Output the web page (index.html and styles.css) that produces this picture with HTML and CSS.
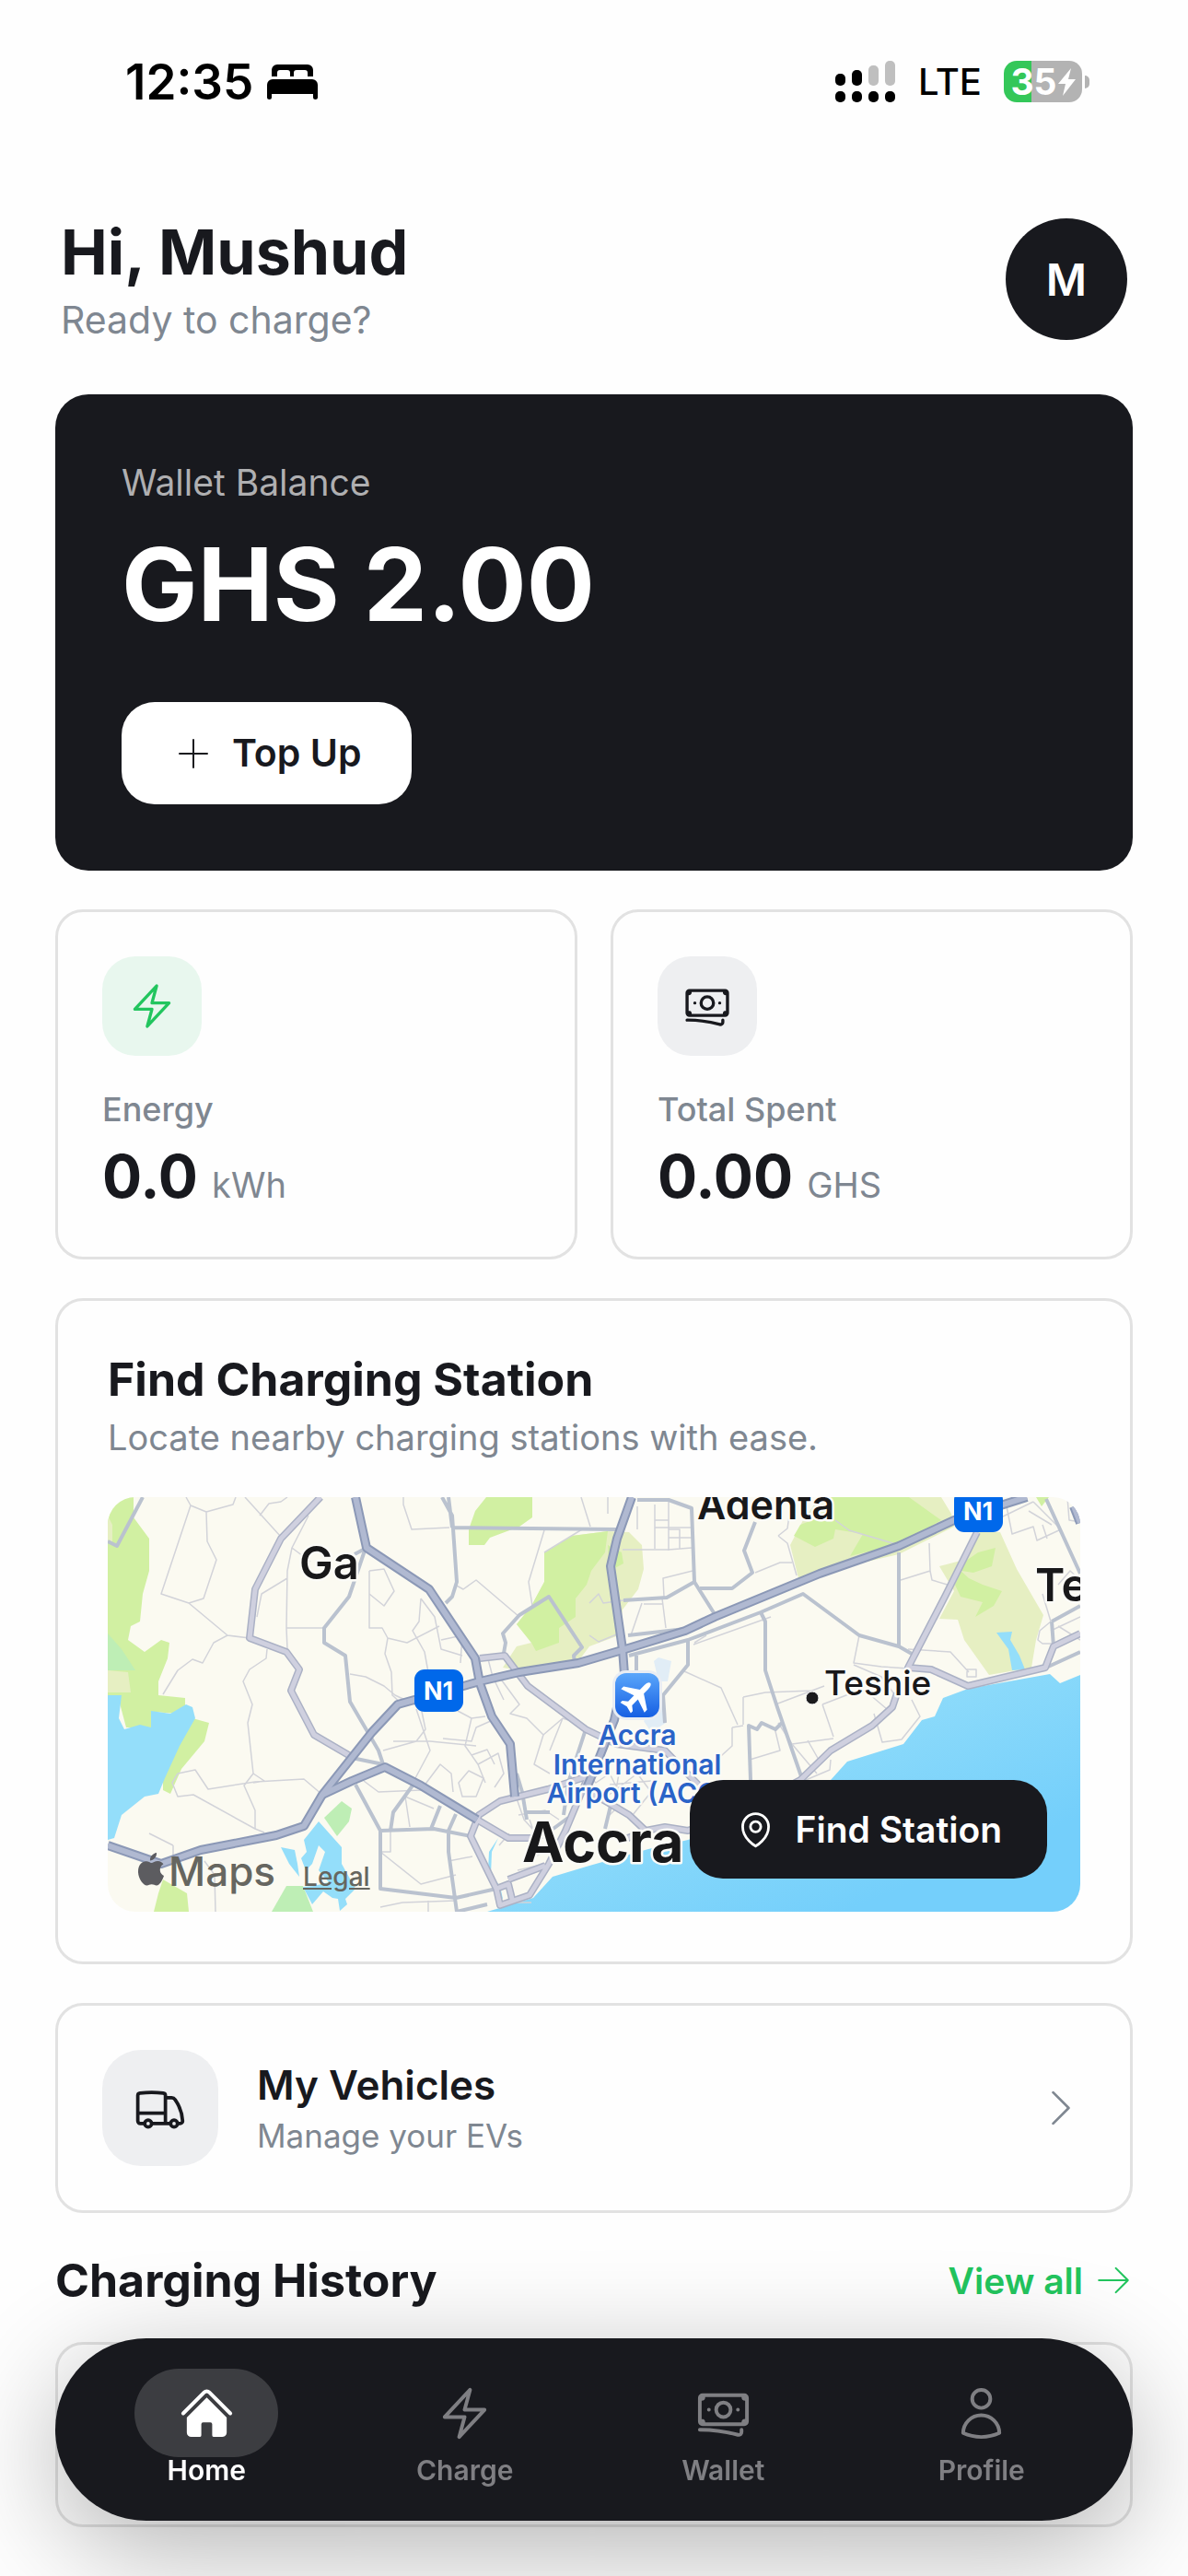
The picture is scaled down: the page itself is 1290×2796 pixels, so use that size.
FILE: index.html
```html
<!DOCTYPE html>
<html lang="en">

<head>
  <meta charset="UTF-8" />
  <meta name="viewport" content="width=device-width, initial-scale=1.0" />
  <title>Home</title>
  <link rel="stylesheet" href="styles.css">
</head>

<body>
  <div class="status-bar">
    <div class="status-left">
      <span class="status-time">12:35</span>
      <svg class="status-bed" viewBox="0 0 55 38" aria-hidden="true">
        <path d="M5 13V6a6 6 0 0 1 6-6h33a6 6 0 0 1 6 6v7h-6V9a3 3 0 0 0-3-3H32a3 3 0 0 0-3 3v4h-4V9a3 3 0 0 0-3-3h-8a3 3 0 0 0-3 3v4Z" />
        <path d="M0 36V22a6 6 0 0 1 6-6h43a6 6 0 0 1 6 6v14q0 2-2.500 2T50 36v-4H5v4q0 2-2.500 2T0 36Z" />
      </svg>
    </div>
    <div class="status-right">
      <svg class="status-signal" viewBox="0 0 66 45" aria-hidden="true">
        <rect x="0" y="14" width="11" height="13" rx="5" />
        <rect x="18" y="10" width="11" height="17" rx="5" />
        <rect class="dim" x="36" y="5" width="11" height="22" rx="5" />
        <rect class="dim" x="54" y="0" width="11" height="27" rx="5" />
        <rect x="0" y="33" width="11" height="12" rx="5" />
        <rect x="18" y="33" width="11" height="12" rx="5" />
        <rect x="36" y="33" width="11" height="12" rx="5" />
        <rect x="54" y="33" width="11" height="12" rx="5" />
      </svg>
      <span class="status-network">LTE</span>
      <div class="battery">
        <div class="battery-body">
          <span>35</span>
          <svg viewBox="0 0 19 30" aria-hidden="true">
            <path d="M14 0 0 17h8L5 30 19 12h-8l3-12Z" />
          </svg>
        </div>
        <div class="battery-nub"></div>
      </div>
    </div>
  </div>

  <main class="content">
    <header class="greeting">
      <div>
        <h1>Hi, Mushud</h1>
        <p>Ready to charge?</p>
      </div>
      <button class="avatar" type="button" aria-label="Account">M</button>
    </header>

    <section class="wallet">
      <p class="wallet-label">Wallet Balance</p>
      <p class="wallet-amount">GHS 2.00</p>
      <button class="topup" type="button">
        <svg class="icon" viewBox="0 0 24 24" aria-hidden="true"><path d="M12 4.500v15m7.500-7.500h-15" /></svg>
        Top Up
      </button>
    </section>

    <section class="stats">
      <article class="card stat">
        <div class="tile tile-green">
          <svg class="icon" viewBox="0 0 24 24" aria-hidden="true"><path d="m3.750 13.500 10.500-11.250L12 10.500h8.250L9.750 21.750 12 13.500H3.750Z" /></svg>
        </div>
        <p class="stat-label">Energy</p>
        <p class="stat-value">0.0 <small>kWh</small></p>
      </article>
      <article class="card stat">
        <div class="tile">
          <svg class="icon" viewBox="0 0 24 24" aria-hidden="true"><path d="M2.250 18.750a60.070 60.070 0 0 1 15.797 2.101c.727.198 1.453-.342 1.453-1.096V18.750M3.750 4.500v.750A.750.750 0 0 1 3 6h-.750m0 0v-.375c0-.621.504-1.125 1.125-1.125H20.250M2.250 6v9m18-10.500v.750c0 .414.336.750.750.750h.750m-1.500-1.500h.375c.621 0 1.125.504 1.125 1.125v9.750c0 .621-.504 1.125-1.125 1.125h-.375m1.500-1.500H21a.750.750 0 0 0-.750.750v.750m0 0H3.750m0 0h-.375a1.125 1.125 0 0 1-1.125-1.125V15m1.500 1.500v-.750A.750.750 0 0 0 3 15h-.750M15 10.500a3 3 0 1 1-6 0 3 3 0 0 1 6 0Zm3 0h.008v.008H18V10.500Zm-12 0h.008v.008H6V10.500Z" /></svg>
        </div>
        <p class="stat-label">Total Spent</p>
        <p class="stat-value">0.00 <small>GHS</small></p>
      </article>
    </section>

    <section class="card finder">
      <h2>Find Charging Station</h2>
      <p class="finder-text">Locate nearby charging stations with ease.</p>
      <div class="map">
        <svg class="map-canvas" viewBox="0 0 1056 450" preserveAspectRatio="xMidYMid slice" role="img" aria-label="Map of Accra">
          <defs>
            <linearGradient id="sea" x1="0" y1="0" x2="1" y2="1">
              <stop offset="0.300" stop-color="#94defa" />
              <stop offset="0.800" stop-color="#74cffb" />
            </linearGradient>
            <linearGradient id="airport" x1="0" y1="0" x2="0" y2="1">
              <stop offset="0" stop-color="#5aa6fb" />
              <stop offset="1" stop-color="#165fe3" />
            </linearGradient>
          </defs>

          <!-- parks -->
          <g class="scrub">
            <path d="M474 60 504 42 543 37 566 38 580 52 582 78 576 100 559 122 555 150 523 162 511 178 447 188 429 185 444 162 460 158 444 138 460 118 474 92Z" />
            <path d="M773 0H905L916 18 919 32 859 62 773 82 750 88 741 52 755 25Z" />
            <path d="M945 38H969L987 78 1016 128 1008 155 1003 185 957 193 930 155 923 133 903 132 919 102 903 75 930 68Z" />
          </g>
          <g class="park">
            <path d="M0 0H28V22L45 45V80L38 105 35 135 25 140 22 155 40 168 58 155 67 158 65 175 55 200 55 215 84 218 84 226 75 235 50 233 47 250 20 250 12 220 0 215Z" />
            <path d="M92 240 110 245 105 265 80 295 68 322 60 318 60 305 80 255Z" />
            <path d="M60 415 86 430 88 450H50L55 430Z" />
            <path d="M411 0H461V22L447 32 415 44 409 52 392 52 392 35 399 15Z" />
            <path d="M474 60 504 42 543 37 540 60 525 80 520 95 508 110 508 130 490 142 490 158 465 167 460 158 444 138 460 118 474 92Z" />
            <path d="M543 52 558 60 560 72 545 80Z" />
            <path d="M773 0H870L905 25 890 34 859 53 830 58 806 64 820 40 790 35 788 45 768 54 745 42 752 30 778 20Z" />
            <path d="M964 55 960 75 940 82 927 80 920 95 926 108 950 114 942 130 962 118 971 102 950 95 935 88 922 76 945 60Z" />
            <path d="M1008 0h14l-8 10z" />
          </g>
          <g class="marsh">
            <path d="M0 148 15 165 30 188H0Z" />
            <path d="M254 330 265 338 262 352 249 368 235 348Z" />
            <path d="M194 422H212L223 450H178Z" />
          </g>
          <path class="scrub" d="M0 188 22 190 25 212 0 212ZM0 20 5 30 5 48 0 50Z" />

          <!-- water -->
          <g class="water">
            <path d="M0 215H15L12 240 18 252 35 247 47 250 47 232 68 235 85 225 92 228 95 240 78 270 62 305 55 322 40 325 15 345 7 370 0 372Z" />
            <path d="M229 352 254 380 254 398 269 425 258 436 260 442 252 449 250 436 244 435 234 428 222 442 212 423 224 422 240 418 229 405 236 385 229 378 222 398 215 405 210 392 216 385 213 372Z" />
            <path d="M188 380 203 383 206 398 208 412 197 398Z" />
            <path d="M965 147 982 146 980 155 990 172 996 187 982 188 978 165Z" />
            <path d="M424 370 417 385 416 410 426 422 429 436 424 434 422 420 413 405 414 385Z" />
          </g>
          <path class="pond" d="M593 178 598 174 612 178 608 200 598 200ZM600 220 606 245 590 255 582 243Z" />
          <path fill="url(#sea)" d="M1056 193 1034 202 1023 192 934 208 907 218 898 238 884 242 864 268 803 287 785 307 740 335 630 372 587 382 523 400 483 412 462 435 412 450H1056Z" />

          <!-- side streets -->
          <g class="street">
            <path d="M85 0 90 9 58 105 88 115 130 150 154 153M90 9 107 16 136 8 139 0M107 16 108 48 118 68 104 110 88 115M149 0 188 43M165 20 175 7 188 5 195 0M130 150 115 158 103 180 92 176 76 188 60 214" />
            <path d="M173 165 172 175 154 187 147 200 157 225 152 245 158 300 148 313 160 340V360M218 20 200 55 195 80 194 142H235M194 142 195 165M200 55 220 70M195 88 167 105 162 130" />
            <path d="M76 300 95 296 109 317 160 309 213 306 233 323M76 300 70 310 76 325 93 323 160 360 170 364M45 365 71 378M71 378V392M105 395 116 410 117 450M158 300 170 308 158 310" />
            <path d="M284 80V142H298L304 153 325 158 360 140M284 80 300 78 311 102 300 118 284 105M304 153 301 170 308 190 309 215 320 225M340 110 338 135 331 145 344 168M340 110 355 130 362 165 385 172M377 95 386 100 400 90 447 130M362 155 385 150 383 180M344 168 348 190" />
            <path d="M321 0V8L330 35 371 33M514 0 524 32M474 36 457 92 461 118M474 60 515 35M263 192 280 195 300 205 312 215 340 228M340 228 345 252 335 265 299 275M335 230 350 275 334 305M310 265 350 265 400 270" />
            <path d="M402 175 408 200M412 172 418 195 430 220M425 195 447 225 437 235 455 240 473 258 463 290 480 300M395 240 410 238M364 262 395 265 400 250 418 242M380 232 395 240 388 270 402 290 410 310M402 290 424 278 430 300 420 315M395 280 412 274 420 290" />
            <path d="M278 308 294 320 340 318 361 290 373 300 375 320M381 310 392 297 408 305 400 325 385 325ZM323 325 354 338M296 385 340 420 378 410M307 362V385H296M370 395 396 390M323 325 328 358M296 445 320 440 378 438M348 438V450M437 440 H460" />
            <path d="M440 300 445 330 452 350 470 370M446 345 475 340 490 350M436 365 425 378M458 350 465 370M473 258 494 240 519 248M494 240 480 275M519 300 530 310 545 300 560 330 545 345M535 330 575 300 590 320 570 345M545 312 590 308M555 300 550 330M452 395 475 385M445 405 475 398" />
            <path d="M543 0V18M575 10 575 35M594 8V56M609 5V58M594 25H609M594 33H634M609 35H621V56M609 44H634M559 57H609L634 55M580 115 568 150M602 110 606 142M582 116H602M604 108 603 88 635 80M523 115 533 105 538 115 560 112M523 150 533 157 555 148" />
            <path d="M703 82 730 71 743 71M728 42 738 34 740 20M728 42 738 50 748 85M790 25 805 36 859 52M861 90 893 80 892 50M893 80 895 90 915 96M816 150 810 180 840 184 869 186M869 165 915 168 935 190M933 187H943V195H933ZM810 182 840 195 855 215" />
            <path d="M626 189 666 207 684 247M690 217 714 212 765 210M690 217 690 247M678 250 690 248M678 250 678 270 656 290M724 250 730 275 697 285M725 225 778 205M776 225 788 260M788 262 743 268 728 245M743 268 770 300M760 264 772 285 760 300M776 225 820 208 846 230M785 285 784 296 758 307M832 235 841 266 862 263 882 238 873 220M636 160 720 130M637 158 650 150" />
            <path d="M975 5 982 40 1005 32 1009 47 1035 35 1005 5M970 22 1005 5M1000 15 1025 30M1015 30 1020 45M1042 0 1044 25 1056 27M1015 105 1024 135M1024 135 1012 145 1010 155 1015 159 1027 159M1024 145 1056 130M1032 95 1045 80 1056 90M1032 140 1056 155" />
          </g>

          <!-- local roads -->
          <g class="local">
            <path d="M38 0 10 53 0 48M279 58 262 108 235 142 235 158 258 172 263 222 294 275 299 290M281 55 268 62" />
            <path d="M363 0 374 20 379 92 374 108 367 115M370 0 374 33M374 33 553 35M429 175 432 158 429 148 447 128 479 108 515 163 506 172 507 180" />
            <path d="M269 312 296 362 354 360 394 368M296 362V425L378 435 422 425M370 362 370 385 379 450 412 442M331 313 310 342 307 362M351 360 361 335M370 362 378 344M265 283 299 290" />
            <path d="M575 3 609 3 634 12 637 92 659 127M703 27 691 58 700 82 678 99 643 99M637 92 607 109 560 112M565 150 627 143M566 172 630 155 709 125 755 105 816 150 859 162 873 170M859 60V162" />
            <path d="M709 125 714 135V188L727 228 753 303M630 155V182L603 215 605 245M574 172V192M696 307 698 307 696 248 705 252 710 245 725 252 732 245M1019 2 1056 83M1025 135 1056 118M1025 135 1027 162M1019 185 1056 168" />
            <path d="M455 350 450 320 444 300M455 342 480 342M470 370 500 348M540 360 546 335M519 252 500 310 495 345" />
          </g>

          <!-- arterial roads, casing under fill -->
          <g class="arterial-case">
            <path id="a1" d="M231 0 188 45 160 100 154 153 194 168 208 187 199 210 224 258 265 282" />
            <path id="a2" d="M404 175 431 172 456 205 519 252 552 268 605 275 641 312" />
            <path id="a3" d="M944 38 909 108 869 185 894 187 934 205 1018 185 1027 162 1056 148" />
            <path id="a4" d="M857 213 852 228 830 248 785 275 752 307 700 335 630 362 605 358 584 362 560 372" />
            <path id="a5" d="M584 362 566 345 544 332 519 318M401 350 435 370 465 370M523 300 497 362 479 398 458 432 426 443 422 425 394 368 403 345 426 330 478 317 530 300" />
            <path id="a6" d="M422 425 435 420 440 440M435 415 475 400" />
          </g>
          <g class="arterial">
            <use href="#a1" /><use href="#a2" /><use href="#a3" /><use href="#a4" /><use href="#a5" /><use href="#a6" />
          </g>

          <!-- highways -->
          <g class="highway-case">
            <path id="h1" d="M0 378 58 398 101 383 183 367 213 357 233 323 287 255 315 225 404 200 447 190 511 180 562 165 627 145 659 130 773 83 859 53 919 25 998 0" />
            <path id="h2" d="M269 0 281 55 349 100 399 175 404 202 417 238 437 268 442 325" />
            <path id="h3" d="M233 323 265 308 301 293 340 313 401 350" />
            <path id="h4" d="M569 0 553 45 546 75 559 165 561 192 550 242 530 292 519 318" />
            <path id="h5" d="M1049 10 1056 28" />
          </g>
          <g class="highway">
            <use href="#h1" /><use href="#h2" /><use href="#h3" /><use href="#h4" /><use href="#h5" />
          </g>

          <!-- route shields -->
          <g class="shield">
            <rect x="333" y="187" width="53" height="46" rx="11" />
            <text x="359" y="220">N1</text>
            <rect x="919" y="-8" width="53" height="46" rx="11" />
            <text x="945" y="25">N1</text>
          </g>

          <!-- airport marker -->
          <rect x="548" y="188" width="54" height="54" rx="15" fill="#e9edf3" />
          <rect x="551" y="191" width="48" height="48" rx="12" fill="url(#airport)" />
          <path transform="translate(575 216) rotate(45)" fill="#fff" d="M0-20c2 0 3 3 3 6v7l15 10v4L3 2v9l5 4v3l-8-2-8 2v-3l5-4V2l-15 5V3L-3-7v-7c0-3 1-6 3-6Z" />

          <!-- place names -->
          <text class="place place-md" x="208" y="89">Ga</text>
          <text class="place place-sm" x="640" y="24">Adenta</text>
          <text class="place place-md" x="1007" y="113">Te</text>
          <circle cx="765" cy="218" r="7" fill="#1b1b1d" stroke="#fff" />
          <text class="place place-xs" x="778" y="215">Teshie</text>
          <text class="place place-lg" x="450" y="396">Accra</text>
          <g class="airport-name">
            <text x="575" y="269">Accra</text>
            <text x="575" y="301">International</text>
            <text x="575" y="332">Airport (ACC)</text>
          </g>
        </svg>
        <div class="map-credit">
          <span class="map-brand">
            <svg viewBox="0 0 28 36" aria-hidden="true">
              <path d="M20 0c.5 4-3 8.500-7 8.500C12.500 4.500 16 .5 20 0ZM14.500 11c1.500 0 3.500-2 7-2 2.500 0 4.500 1.300 6 3.200-5.500 3.300-4.500 10.600.5 12.800-1.500 4.500-4.500 10.500-8 10.500-2 0-3-1.200-5.300-1.200S11.500 35.500 9.500 35.500C5.500 35.500 0 28 0 20.500 0 13 4.500 9.300 8.800 9.300c2.500 0 4.200 1.700 5.700 1.700Z" />
            </svg>Maps
          </span>
          <a href="#legal">Legal</a>
        </div>
        <button class="find-station" type="button">
          <svg class="icon" viewBox="0 0 24 24" aria-hidden="true"><path d="M15 10.500a3 3 0 1 1-6 0 3 3 0 0 1 6 0Z" /><path d="M19.500 10.500c0 7.142-7.500 11.250-7.500 11.250S4.500 17.642 4.500 10.500a7.500 7.500 0 1 1 15 0Z" /></svg>
          Find Station
        </button>
      </div>
    </section>

    <a class="card vehicles" href="#vehicles">
      <span class="tile tile-lg">
        <svg class="icon" viewBox="0 0 24 24" aria-hidden="true"><path d="M8.250 18.750a1.500 1.500 0 0 1-3 0m3 0a1.500 1.500 0 0 0-3 0m3 0h6m-9 0H3.375a1.125 1.125 0 0 1-1.125-1.125V14.250m17.250 4.500a1.500 1.500 0 0 1-3 0m3 0a1.500 1.500 0 0 0-3 0m3 0h1.125c.621 0 1.129-.504 1.090-1.124a17.902 17.902 0 0 0-3.213-9.193 2.056 2.056 0 0 0-1.580-.860H14.250M16.500 18.750h-2.250m0-11.177v-.958c0-.568-.422-1.048-.987-1.106a48.554 48.554 0 0 0-10.026 0 1.106 1.106 0 0 0-.987 1.106v7.635m12-6.677v6.677m0 4.500v-4.500m0 0h-12" /></svg>
      </span>
      <span class="vehicles-text">
        <strong>My Vehicles</strong>
        <span>Manage your EVs</span>
      </span>
      <svg class="icon chevron" viewBox="0 0 24 24" aria-hidden="true"><path d="m8.250 4.500 7.500 7.500-7.500 7.500" /></svg>
    </a>

    <section class="history">
      <div class="history-head">
        <h2>Charging History</h2>
        <a href="#history">
          View all
          <svg class="icon" viewBox="0 0 24 24" aria-hidden="true"><path d="M13.500 4.500 21 12m0 0-7.500 7.500M21 12H3" /></svg>
        </a>
      </div>
      <div class="card history-card"></div>
    </section>
  </main>

  <nav class="tab-bar" aria-label="Main">
    <a class="tab active" href="#home" aria-current="page">
      <span class="tab-icon">
        <svg viewBox="0 0 24 24" fill="currentColor" aria-hidden="true"><path d="M11.470 3.841a.750.750 0 0 1 1.060 0l8.690 8.690a.750.750 0 1 0 1.060-1.061l-8.689-8.690a2.250 2.250 0 0 0-3.182 0l-8.690 8.690a.750.750 0 1 0 1.061 1.060l8.690-8.689Z" /><path d="m12 5.432 8.159 8.159c.030.030.060.058.091.086v6.198c0 1.035-.840 1.875-1.875 1.875H15a.750.750 0 0 1-.750-.750v-4.500a.750.750 0 0 0-.750-.750h-3a.750.750 0 0 0-.750.750V21a.750.750 0 0 1-.750.750H5.625a1.875 1.875 0 0 1-1.875-1.875v-6.198a2.290 2.290 0 0 0 .091-.086L12 5.432Z" /></svg>
      </span>
      Home
    </a>
    <a class="tab" href="#charge">
      <span class="tab-icon">
        <svg class="icon" viewBox="0 0 24 24" aria-hidden="true"><path d="m3.750 13.500 10.500-11.250L12 10.500h8.250L9.750 21.750 12 13.500H3.750Z" /></svg>
      </span>
      Charge
    </a>
    <a class="tab" href="#wallet">
      <span class="tab-icon">
        <svg class="icon" viewBox="0 0 24 24" aria-hidden="true"><path d="M2.250 18.750a60.070 60.070 0 0 1 15.797 2.101c.727.198 1.453-.342 1.453-1.096V18.750M3.750 4.500v.750A.750.750 0 0 1 3 6h-.750m0 0v-.375c0-.621.504-1.125 1.125-1.125H20.250M2.250 6v9m18-10.500v.750c0 .414.336.750.750.750h.750m-1.500-1.500h.375c.621 0 1.125.504 1.125 1.125v9.750c0 .621-.504 1.125-1.125 1.125h-.375m1.500-1.500H21a.750.750 0 0 0-.750.750v.750m0 0H3.750m0 0h-.375a1.125 1.125 0 0 1-1.125-1.125V15m1.500 1.500v-.750A.750.750 0 0 0 3 15h-.750M15 10.500a3 3 0 1 1-6 0 3 3 0 0 1 6 0Zm3 0h.008v.008H18V10.500Zm-12 0h.008v.008H6V10.500Z" /></svg>
      </span>
      Wallet
    </a>
    <a class="tab" href="#profile">
      <span class="tab-icon">
        <svg class="icon" viewBox="0 0 24 24" aria-hidden="true"><path d="M15.750 6a3.750 3.750 0 1 1-7.500 0 3.750 3.750 0 0 1 7.500 0ZM4.501 20.118a7.500 7.500 0 0 1 14.998 0A17.933 17.933 0 0 1 12 21.750c-2.676 0-5.216-.584-7.499-1.632Z" /></svg>
      </span>
      Profile
    </a>
  </nav>
</body>

</html>
```
FILE: styles.css
```css
* {
  box-sizing: border-box;
}

body {
  margin: 0;
  background: #fefefe;
  color: #18191e;
  font-family: Inter, "Liberation Sans", sans-serif;
}

h1,
h2,
p {
  margin: 0;
}

a {
  color: inherit;
  text-decoration: none;
}

button {
  border: 0;
  font-family: inherit;
  cursor: pointer;
}

.icon {
  fill: none;
  stroke: currentColor;
  stroke-width: 1.5;
  stroke-linecap: round;
  stroke-linejoin: round;
}

/* status bar */
.status-bar {
  display: flex;
  justify-content: space-between;
  align-items: center;
  height: 177px;
  padding: 0 107px 0 136px;
  color: #000;
}

.status-left,
.status-right {
  display: flex;
  align-items: center;
}

.status-left {
  gap: 15px;
}

.status-right {
  gap: 24px;
}

.status-time {
  font-size: 53px;
  font-weight: 600;
}

.status-bed {
  width: 55px;
  height: 38px;
}

.status-signal {
  width: 66px;
  height: 45px;
}

.status-signal .dim {
  fill: #bfbfbf;
}

.status-network {
  font-size: 40px;
  font-weight: 500;
}

.battery {
  display: flex;
  align-items: center;
  gap: 3px;
}

.battery-body {
  display: flex;
  justify-content: center;
  align-items: center;
  gap: 1px;
  width: 85px;
  height: 45px;
  border-radius: 14px;
  background: linear-gradient(90deg, #34c759 35%, #b3b3b3 35%);
  color: #fff;
  font-size: 39px;
  font-weight: 700;
}

.battery-body svg {
  width: 19px;
  height: 30px;
  fill: currentColor;
}

.battery-nub {
  width: 5px;
  height: 14px;
  border-radius: 0 5px 5px 0;
  background: #b3b3b3;
}

/* page */
.content {
  display: flex;
  flex-direction: column;
  gap: 42px;
  padding: 52px 60px 54px;
}

.greeting {
  display: flex;
  justify-content: space-between;
  align-items: center;
  padding: 0 6px 9px;
}

.greeting h1 {
  font-size: 68px;
  font-weight: 700;
  line-height: 88px;
}

.greeting p {
  color: #7f8791;
  font-size: 41px;
  line-height: 60px;
}

.avatar {
  width: 132px;
  height: 132px;
  border-radius: 50%;
  background: #18191e;
  color: #fff;
  font-size: 48px;
  font-weight: 600;
}

/* wallet */
.wallet {
  padding: 72px;
  border-radius: 36px;
  background: #18191e;
  color: #fff;
}

.wallet-label {
  color: #afafb1;
  font-size: 39px;
  line-height: 48px;
}

.wallet-amount {
  margin: 18px 0 60px;
  font-size: 110px;
  font-weight: 700;
  line-height: 136px;
}

.topup {
  display: flex;
  align-items: center;
  gap: 18px;
  padding: 30px 54px;
  border-radius: 36px;
  background: #fff;
  color: #18191e;
  font-size: 41px;
  font-weight: 600;
  line-height: 51px;
}

.topup .icon {
  width: 48px;
  height: 48px;
  stroke-width: 1;
}

/* cards */
.card {
  border: 3px solid #e2e2e2;
  border-radius: 30px;
}

.tile {
  display: flex;
  flex: none;
  justify-content: center;
  align-items: center;
  width: 108px;
  height: 108px;
  border-radius: 36px;
  background: #eeeff1;
}

.tile .icon {
  width: 54px;
  height: 54px;
}

.tile-green {
  background: #e8f7ee;
  color: #22c55e;
}

.tile-lg {
  width: 126px;
  height: 126px;
  border-radius: 42px;
}

.tile-lg .icon {
  width: 60px;
  height: 60px;
}

.stats {
  display: grid;
  grid-template-columns: 1fr 1fr;
  gap: 36px;
}

.stat {
  padding: 48px;
}

.stat-label {
  margin: 36px 0 12px;
  color: #7f8791;
  font-size: 36px;
  font-weight: 500;
  line-height: 44px;
}

.stat-value {
  font-size: 64px;
  font-weight: 700;
  line-height: 78px;
}

.stat-value small {
  color: #7f8791;
  font-size: 38px;
  font-weight: 400;
  line-height: 38px;
}

/* station finder */
.finder {
  padding: 54px;
}

.finder h2,
.history h2 {
  font-size: 50px;
  font-weight: 700;
  line-height: 62px;
}

.finder-text {
  margin: 4px 0 36px;
  color: #7f8791;
  font-size: 38px;
  line-height: 57px;
}

.map {
  position: relative;
  height: 450px;
  border-radius: 30px;
  background: #fbfaf1;
  overflow: hidden;
}

.map-canvas {
  display: block;
  width: 100%;
  height: 100%;
}

.park { fill: #d1f0a2; }
.scrub { fill: #e6efc2; }
.marsh { fill: #beeeb5; }
.water { fill: #94defa; }
.pond { fill: #e1edf6; }

.street,
.local,
.arterial-case,
.arterial,
.highway-case,
.highway {
  fill: none;
  stroke-linejoin: round;
}

.street { stroke: #d2d3d9; stroke-width: 1.5; }
.local { stroke: #bac2cf; stroke-width: 4; }
.arterial-case { stroke: #abb1c5; stroke-width: 8; }
.arterial { stroke: #cfd0df; stroke-width: 5; }
.highway-case { stroke: #8b98b6; stroke-width: 10; }
.highway { stroke: #b0b9d1; stroke-width: 6; }

.shield {
  fill: #0068ea;
  font-size: 27px;
  font-weight: 700;
  text-anchor: middle;
}

.shield text {
  fill: #fff;
}

.place,
.airport-name {
  fill: #18181a;
  stroke: #fbfbf7;
  stroke-width: 5;
  stroke-linejoin: round;
  paint-order: stroke;
  font-weight: 600;
}

.place-xs { font-size: 37px; font-weight: 500; }
.place-sm { font-size: 43px; }
.place-md { font-size: 49px; }
.place-lg { font-size: 61px; font-weight: 700; }

.airport-name {
  fill: #2a63c8;
  font-size: 30px;
  text-anchor: middle;
}

.map-credit {
  position: absolute;
  bottom: 17px;
  left: 33px;
  display: flex;
  align-items: baseline;
  gap: 30px;
  color: #666660;
}

.map-brand {
  font-size: 44px;
  font-weight: 500;
  line-height: 54px;
}

.map-brand svg {
  width: 28px;
  height: 36px;
  margin-right: 5px;
  fill: #5c5c60;
}

.map-credit a {
  font-size: 28px;
  font-weight: 500;
  text-decoration: underline;
}

.find-station {
  position: absolute;
  right: 36px;
  bottom: 36px;
  display: flex;
  align-items: center;
  gap: 21px;
  padding: 28px 49px;
  border-radius: 36px;
  background: #18191e;
  color: #fff;
  font-size: 39px;
  font-weight: 600;
  line-height: 51px;
}

.find-station .icon {
  width: 45px;
  height: 45px;
}

/* vehicles */
.vehicles {
  display: flex;
  align-items: center;
  gap: 42px;
  padding: 48px;
}

.vehicles-text {
  display: flex;
  flex: 1;
  flex-direction: column;
  color: #7f8791;
  font-size: 35px;
  line-height: 51px;
}

.vehicles-text strong {
  color: #18191e;
  font-size: 44px;
  font-weight: 600;
  line-height: 60px;
}

.chevron {
  width: 54px;
  height: 54px;
  color: #7f8791;
  stroke-width: 1.2;
}

/* history */
.history-head {
  display: flex;
  justify-content: space-between;
  align-items: center;
  margin-bottom: 36px;
}

.history-head a {
  display: flex;
  align-items: center;
  gap: 12px;
  color: #22c55e;
  font-size: 39px;
  font-weight: 600;
}

.history-head .icon {
  width: 42px;
  height: 42px;
  stroke-width: 1.2;
}

.history-card {
  height: 201px;
}

/* bottom navigation */
.tab-bar {
  position: fixed;
  right: 60px;
  bottom: 60px;
  left: 60px;
  display: grid;
  grid-template-columns: repeat(4, 1fr);
  height: 198px;
  padding: 33px 24px;
  border-radius: 99px;
  background: #18191e;
  box-shadow: 0 30px 120px rgba(0, 0, 0, 0.3);
}

.tab {
  display: flex;
  flex-direction: column;
  align-items: center;
  color: #7f7f83;
  font-size: 30px;
  font-weight: 600;
  line-height: 28px;
}

.tab-icon {
  display: flex;
  justify-content: center;
  align-items: center;
  width: 156px;
  height: 96px;
  border-radius: 48px;
}

.tab-icon svg {
  width: 63px;
  height: 63px;
}

.tab.active {
  color: #fff;
}

.tab.active .tab-icon {
  background: #3c3d41;
}
```
